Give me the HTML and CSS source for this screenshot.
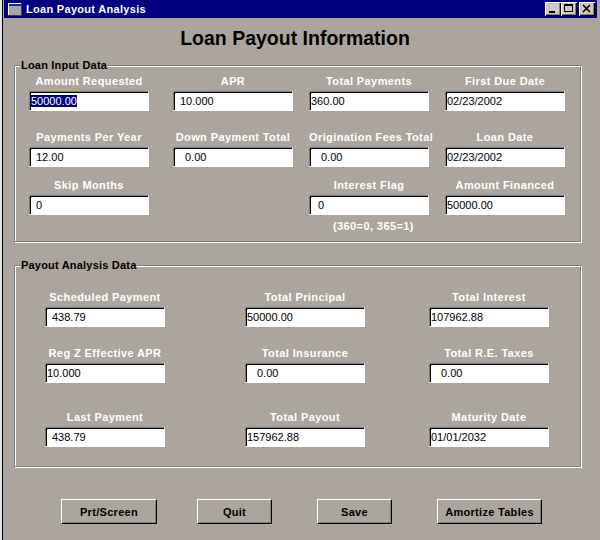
FILE: index.html
```html
<!DOCTYPE html>
<html lang="en">
<head>
    <meta charset="UTF-8">
    <title>Loan Payout Analysis</title>
    <link rel="stylesheet" href="styles.css">
</head>
<body>

<div class="screen">
    <div class="desktop-edge"></div>

    <div class="window">
        <!-- Caption bar -->
        <div class="titlebar">
            <svg class="app-icon" width="14" height="13" viewBox="0 0 14 13">
                <rect width="14" height="13" fill="#404040"/>
                <rect width="13" height="12" fill="#ffffff"/>
                <rect x="1" y="1" width="12" height="11" fill="#a8a8a8"/>
                <rect x="1" y="1" width="12" height="2" fill="#1a1ac8"/>
            </svg>
            <span class="title">Loan Payout Analysis</span>
            <div class="controls">
                <span class="ctl">
                    <svg width="16" height="14" viewBox="0 0 16 14"><rect x="4" y="9" width="6" height="2" fill="#000"/></svg>
                </span>
                <span class="ctl">
                    <svg width="16" height="14" viewBox="0 0 16 14"><rect x="3.5" y="2.5" width="8" height="7" fill="none" stroke="#000"/><rect x="3" y="2" width="9" height="2" fill="#000"/></svg>
                </span>
                <span class="ctl ctl-close">
                    <svg width="16" height="14" viewBox="0 0 16 14"><path d="M4 3 L11 10 M11 3 L4 10" stroke="#000" stroke-width="1.6"/></svg>
                </span>
            </div>
        </div>

        <div class="client">
            <h1>Loan Payout Information</h1>

            <!-- Loan input -->
            <section class="group input-group">
                <div class="group-title">Loan Input Data</div>

                <div class="row">
                    <div class="field">
                        <div class="label">Amount Requested</div>
                        <div class="box"><span class="selected">50000.00</span></div>
                    </div>
                    <div class="field">
                        <div class="label">APR</div>
                        <div class="box indent-1">10.000</div>
                    </div>
                    <div class="field">
                        <div class="label">Total Payments</div>
                        <div class="box">360.00</div>
                    </div>
                    <div class="field">
                        <div class="label">First Due Date</div>
                        <div class="box">02/23/2002</div>
                    </div>
                </div>

                <div class="row row-2">
                    <div class="field">
                        <div class="label">Payments Per Year</div>
                        <div class="box indent-1">12.00</div>
                    </div>
                    <div class="field">
                        <div class="label">Down Payment Total</div>
                        <div class="box indent-3">0.00</div>
                    </div>
                    <div class="field">
                        <div class="label">Origination Fees Total</div>
                        <div class="box indent-3">0.00</div>
                    </div>
                    <div class="field">
                        <div class="label">Loan Date</div>
                        <div class="box">02/23/2002</div>
                    </div>
                </div>

                <div class="row row-3">
                    <div class="field">
                        <div class="label">Skip Months</div>
                        <div class="box indent-1">0</div>
                    </div>
                    <div></div>
                    <div class="field">
                        <div class="label">Interest Flag</div>
                        <div class="box indent-2">0</div>
                    </div>
                    <div class="field">
                        <div class="label">Amount Financed</div>
                        <div class="box">50000.00</div>
                    </div>
                </div>

                <div class="note">(360=0, 365=1)</div>
            </section>

            <!-- Payout results -->
            <section class="group payout-group">
                <div class="group-title">Payout Analysis Data</div>

                <div class="row">
                    <div class="field">
                        <div class="label">Scheduled Payment</div>
                        <div class="box indent-1">438.79</div>
                    </div>
                    <div class="field">
                        <div class="label">Total Principal</div>
                        <div class="box">50000.00</div>
                    </div>
                    <div class="field">
                        <div class="label">Total Interest</div>
                        <div class="box">107962.88</div>
                    </div>
                </div>

                <div class="row row-2">
                    <div class="field">
                        <div class="label">Reg Z Effective APR</div>
                        <div class="box">10.000</div>
                    </div>
                    <div class="field">
                        <div class="label">Total Insurance</div>
                        <div class="box indent-3">0.00</div>
                    </div>
                    <div class="field">
                        <div class="label">Total R.E. Taxes</div>
                        <div class="box indent-3">0.00</div>
                    </div>
                </div>

                <div class="row row-3">
                    <div class="field">
                        <div class="label">Last Payment</div>
                        <div class="box indent-1">438.79</div>
                    </div>
                    <div class="field">
                        <div class="label">Total Payout</div>
                        <div class="box">157962.88</div>
                    </div>
                    <div class="field">
                        <div class="label">Maturity Date</div>
                        <div class="box">01/01/2032</div>
                    </div>
                </div>
            </section>

            <div class="actions">
                <button class="btn btn-print">Prt/Screen</button>
                <button class="btn btn-quit">Quit</button>
                <button class="btn btn-save">Save</button>
                <button class="btn btn-amortize">Amortize Tables</button>
            </div>
        </div>
    </div>
</div>

</body>
</html>
```

FILE: styles.css
```css
/* --- Theme --- */
:root {
    --face: #aca59d;
    --navy: #000080;
    --shadow: #808080;
    --light: #ffffff;
}

* {
    box-sizing: border-box;
    margin: 0;
    padding: 0;
}

body {
    background: var(--face);
    font-family: "Liberation Sans", Arial, sans-serif;
    font-size: 11px;
    color: #000;
}

.screen {
    display: flex;
    width: 600px;
    height: 540px;
    overflow: hidden;
}

.desktop-edge {
    flex: none;
    width: 3px;
    border-left: 2px solid #dfe6e6;
    background: #000;
}

.window {
    flex: 1;
    padding: 0 3px 0 1px;
    background: var(--face);
}

/* --- Caption bar --- */
.titlebar {
    display: flex;
    align-items: center;
    height: 18px;
    background: var(--navy);
    color: var(--light);
}

.app-icon {
    margin-left: 4px;
}

.title {
    margin-left: 4px;
    font-weight: bold;
    line-height: 18px;
    letter-spacing: 0.3px;
}

.controls {
    display: flex;
    margin-left: auto;
    padding-right: 2px;
}

.ctl {
    display: block;
    width: 16px;
    height: 14px;
    background: #cdc8c1;
    box-shadow: inset 1px 1px var(--light), inset -1px -1px #000, inset -2px -2px var(--shadow);
}

.ctl svg {
    display: block;
}

.ctl-close {
    margin-left: 2px;
}

/* --- Client area --- */
h1 {
    margin-top: 8px;
    padding-right: 11px;
    font-size: 19.5px;
    line-height: 24px;
    text-align: center;
}

.group {
    position: relative;
    margin: 15px 16px 0 10px;
    border: 1px solid var(--shadow);
    box-shadow: inset 1px 1px var(--light), 1px 1px var(--light);
}

.group-title {
    position: absolute;
    top: -7px;
    left: 5px;
    padding: 0 1px;
    background: var(--face);
    font-weight: bold;
    line-height: 13px;
    letter-spacing: 0.2px;
}

.row {
    display: grid;
}

.input-group {
    padding: 9px 0 8px;
}

.input-group .row {
    grid-template-columns: 144px 136px 136px 120px;
    padding-left: 14px;
}

.input-group .row-2 { margin-top: 20px; }
.input-group .row-3 { margin-top: 12px; }

.payout-group {
    margin-top: 23px;
    padding: 25px 0 19px;
}

.payout-group .row {
    grid-template-columns: 200px 184px 120px;
    padding-left: 30px;
}

.payout-group .row-2 { margin-top: 20px; }
.payout-group .row-3 { margin-top: 28px; }

.field {
    width: 120px;
}

.label {
    margin-bottom: 3px;
    color: var(--light);
    font-weight: bold;
    line-height: 13px;
    letter-spacing: 0.4px;
    text-align: center;
    white-space: nowrap;
}

/* sunken edit box */
.box {
    height: 20px;
    padding-left: 1px;
    background: var(--light);
    border: 1px solid;
    border-color: var(--shadow) var(--light) var(--light) var(--shadow);
    box-shadow: inset 1px 1px #000;
    line-height: 18px;
    white-space: nowrap;
}

.box.indent-1 { padding-left: 6px; }
.box.indent-2 { padding-left: 8px; }
.box.indent-3 { padding-left: 11px; }

.selected {
    background: var(--navy);
    color: var(--light);
}

.note {
    margin: 5px 0 0 318px;
    color: var(--light);
    font-weight: bold;
    line-height: 13px;
    letter-spacing: 0.4px;
}

/* --- Buttons --- */
.actions {
    display: grid;
    grid-template-columns: 136px 120px 120px 105px;
    margin: 32px 0 0 57px;
}

.btn {
    height: 25px;
    font-family: "Liberation Sans", Arial, sans-serif;
    font-size: 11px;
    font-weight: bold;
    letter-spacing: 0.3px;
    color: #000;
    background: var(--face);
    border: 1px solid;
    border-color: var(--light) #000 #000 var(--light);
    box-shadow: inset -1px -1px var(--shadow);
}

.btn-print { width: 96px; }
.btn-quit { width: 75px; }
.btn-save { width: 75px; }
.btn-amortize { width: 105px; }
```
